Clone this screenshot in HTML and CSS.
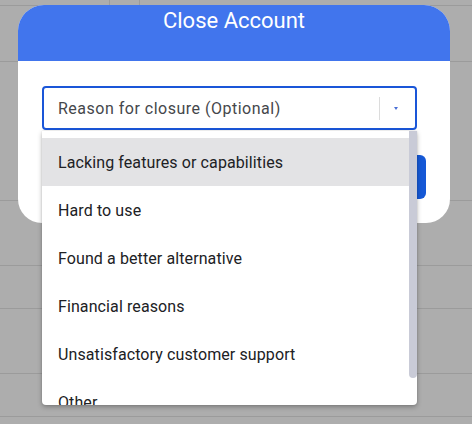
FILE: index.html
```html
<!DOCTYPE html>
<html>
<head>
<meta charset="utf-8">
<link rel="stylesheet" href="styles.css">
</head>
<body>
<div class="sheet">
  <div class="row r1"><div class="cell c1"></div><div class="cell c2"></div><div class="cell c3"></div></div>
  <div class="row r2"></div>
  <div class="row r3"></div>
  <div class="row r4"></div>
  <div class="row r5"></div>
  <div class="row r6"></div>
  <div class="row r7"></div>
</div>

<div class="dialog">
  <div class="dialog-header">
    <h2 class="dialog-title">Close Account</h2>
  </div>
  <div class="dialog-body">
    <div class="select">
      <span class="select-value">Reason for closure (Optional)</span>
      <span class="select-sep"></span>
      <span class="select-caret"></span>
    </div>
    <div class="actions">
      <button class="btn btn-primary">Close</button>
    </div>
  </div>
</div>

<div class="menu">
  <ul class="menu-list">
    <li class="menu-item active">Lacking features or capabilities</li>
    <li class="menu-item">Hard to use</li>
    <li class="menu-item">Found a better alternative</li>
    <li class="menu-item">Financial reasons</li>
    <li class="menu-item">Unsatisfactory customer support</li>
    <li class="menu-item">Other</li>
  </ul>
  <div class="menu-track"><div class="menu-thumb"></div></div>
</div>
</body>
</html>
```

FILE: styles.css
```css
html, body {
  margin: 0;
  padding: 0;
}
body {
  width: 472px;
  height: 424px;
  overflow: hidden;
  background: #adadad;
  font-family: Roboto, "Liberation Sans", sans-serif;
  position: relative;
}
.sheet {
  display: flex;
  flex-direction: column;
}
.row {
  border-bottom: 1px solid #9b9b9b;
  box-sizing: border-box;
}
.r1 { height: 6px; display: flex; }
.r2 { height: 56px; }
.r3 { height: 139px; }
.r4 { height: 65px; }
.r5 { height: 43px; }
.r6 { height: 65px; }
.r7 { height: 43px; }
.cell { height: 100%; border-right: 1px solid #9b9b9b; box-sizing: border-box; }
.c1 { width: 110px; }
.c2 { width: 30px; }
.c3 { flex: 1; border-right: none; }

.dialog {
  position: absolute;
  left: 18px;
  top: 5px;
  width: 432px;
  background: #fff;
  border-radius: 26px 26px 24px 24px;
  overflow: hidden;
}
.dialog-header {
  background: #4175ed;
  height: 56px;
  box-sizing: border-box;
  padding-top: 3px;
}
.dialog-title {
  margin: 0;
  font-weight: 400;
  font-size: 22px;
  line-height: 26px;
  color: #fff;
  text-align: center;
}
.dialog-body {
  padding: 25px 24px 24px 24px;
}
.select {
  width: 375px;
  height: 44px;
  box-sizing: border-box;
  border: 2px solid #1a56d8;
  border-radius: 4px;
  display: flex;
  align-items: center;
  padding-left: 14px;
}
.select-value {
  flex: 1;
  font-size: 16px;
  letter-spacing: 0.5px;
  color: #45474b;
  padding-top: 1px;
}
.select-sep {
  width: 1px;
  height: 23px;
  background: #dcdcdc;
}
.select-caret {
  width: 0;
  height: 0;
  border-left: 2.5px solid transparent;
  border-right: 2.5px solid transparent;
  border-top: 3px solid #4a6fd6;
  margin: 1px 17px 0 14px;
}
.actions {
  margin-top: 25px;
  display: flex;
  justify-content: flex-end;
  gap: 12px;
}
.btn {
  height: 44px;
  border: none;
  border-radius: 6px;
  font-family: inherit;
  font-size: 15px;
  padding: 0 24px;
}
.btn-primary {
  background: #1558d6;
  color: #fff;
}

.menu {
  position: absolute;
  left: 42px;
  top: 131px;
  width: 375px;
  height: 274px;
  background: #fff;
  border-radius: 0 0 4px 4px;
  box-shadow: 0 2px 5px rgba(0,0,0,0.28), 0 0 2px rgba(0,0,0,0.12);
  overflow: hidden;
  display: flex;
}
.menu-list {
  list-style: none;
  margin: 0;
  padding: 7px 0 0 0;
  flex: 1;
}
.menu-item {
  height: 48px;
  display: flex;
  align-items: center;
  padding-left: 16px;
  font-size: 16px;
  letter-spacing: 0.1px;
  color: #202124;
}
.menu-item.active {
  background: #e3e3e5;
}
.menu-track {
  width: 8px;
}
.menu-thumb {
  height: 247px;
  background: #c9cbd7;
  border-radius: 0 0 4px 4px;
}
```
